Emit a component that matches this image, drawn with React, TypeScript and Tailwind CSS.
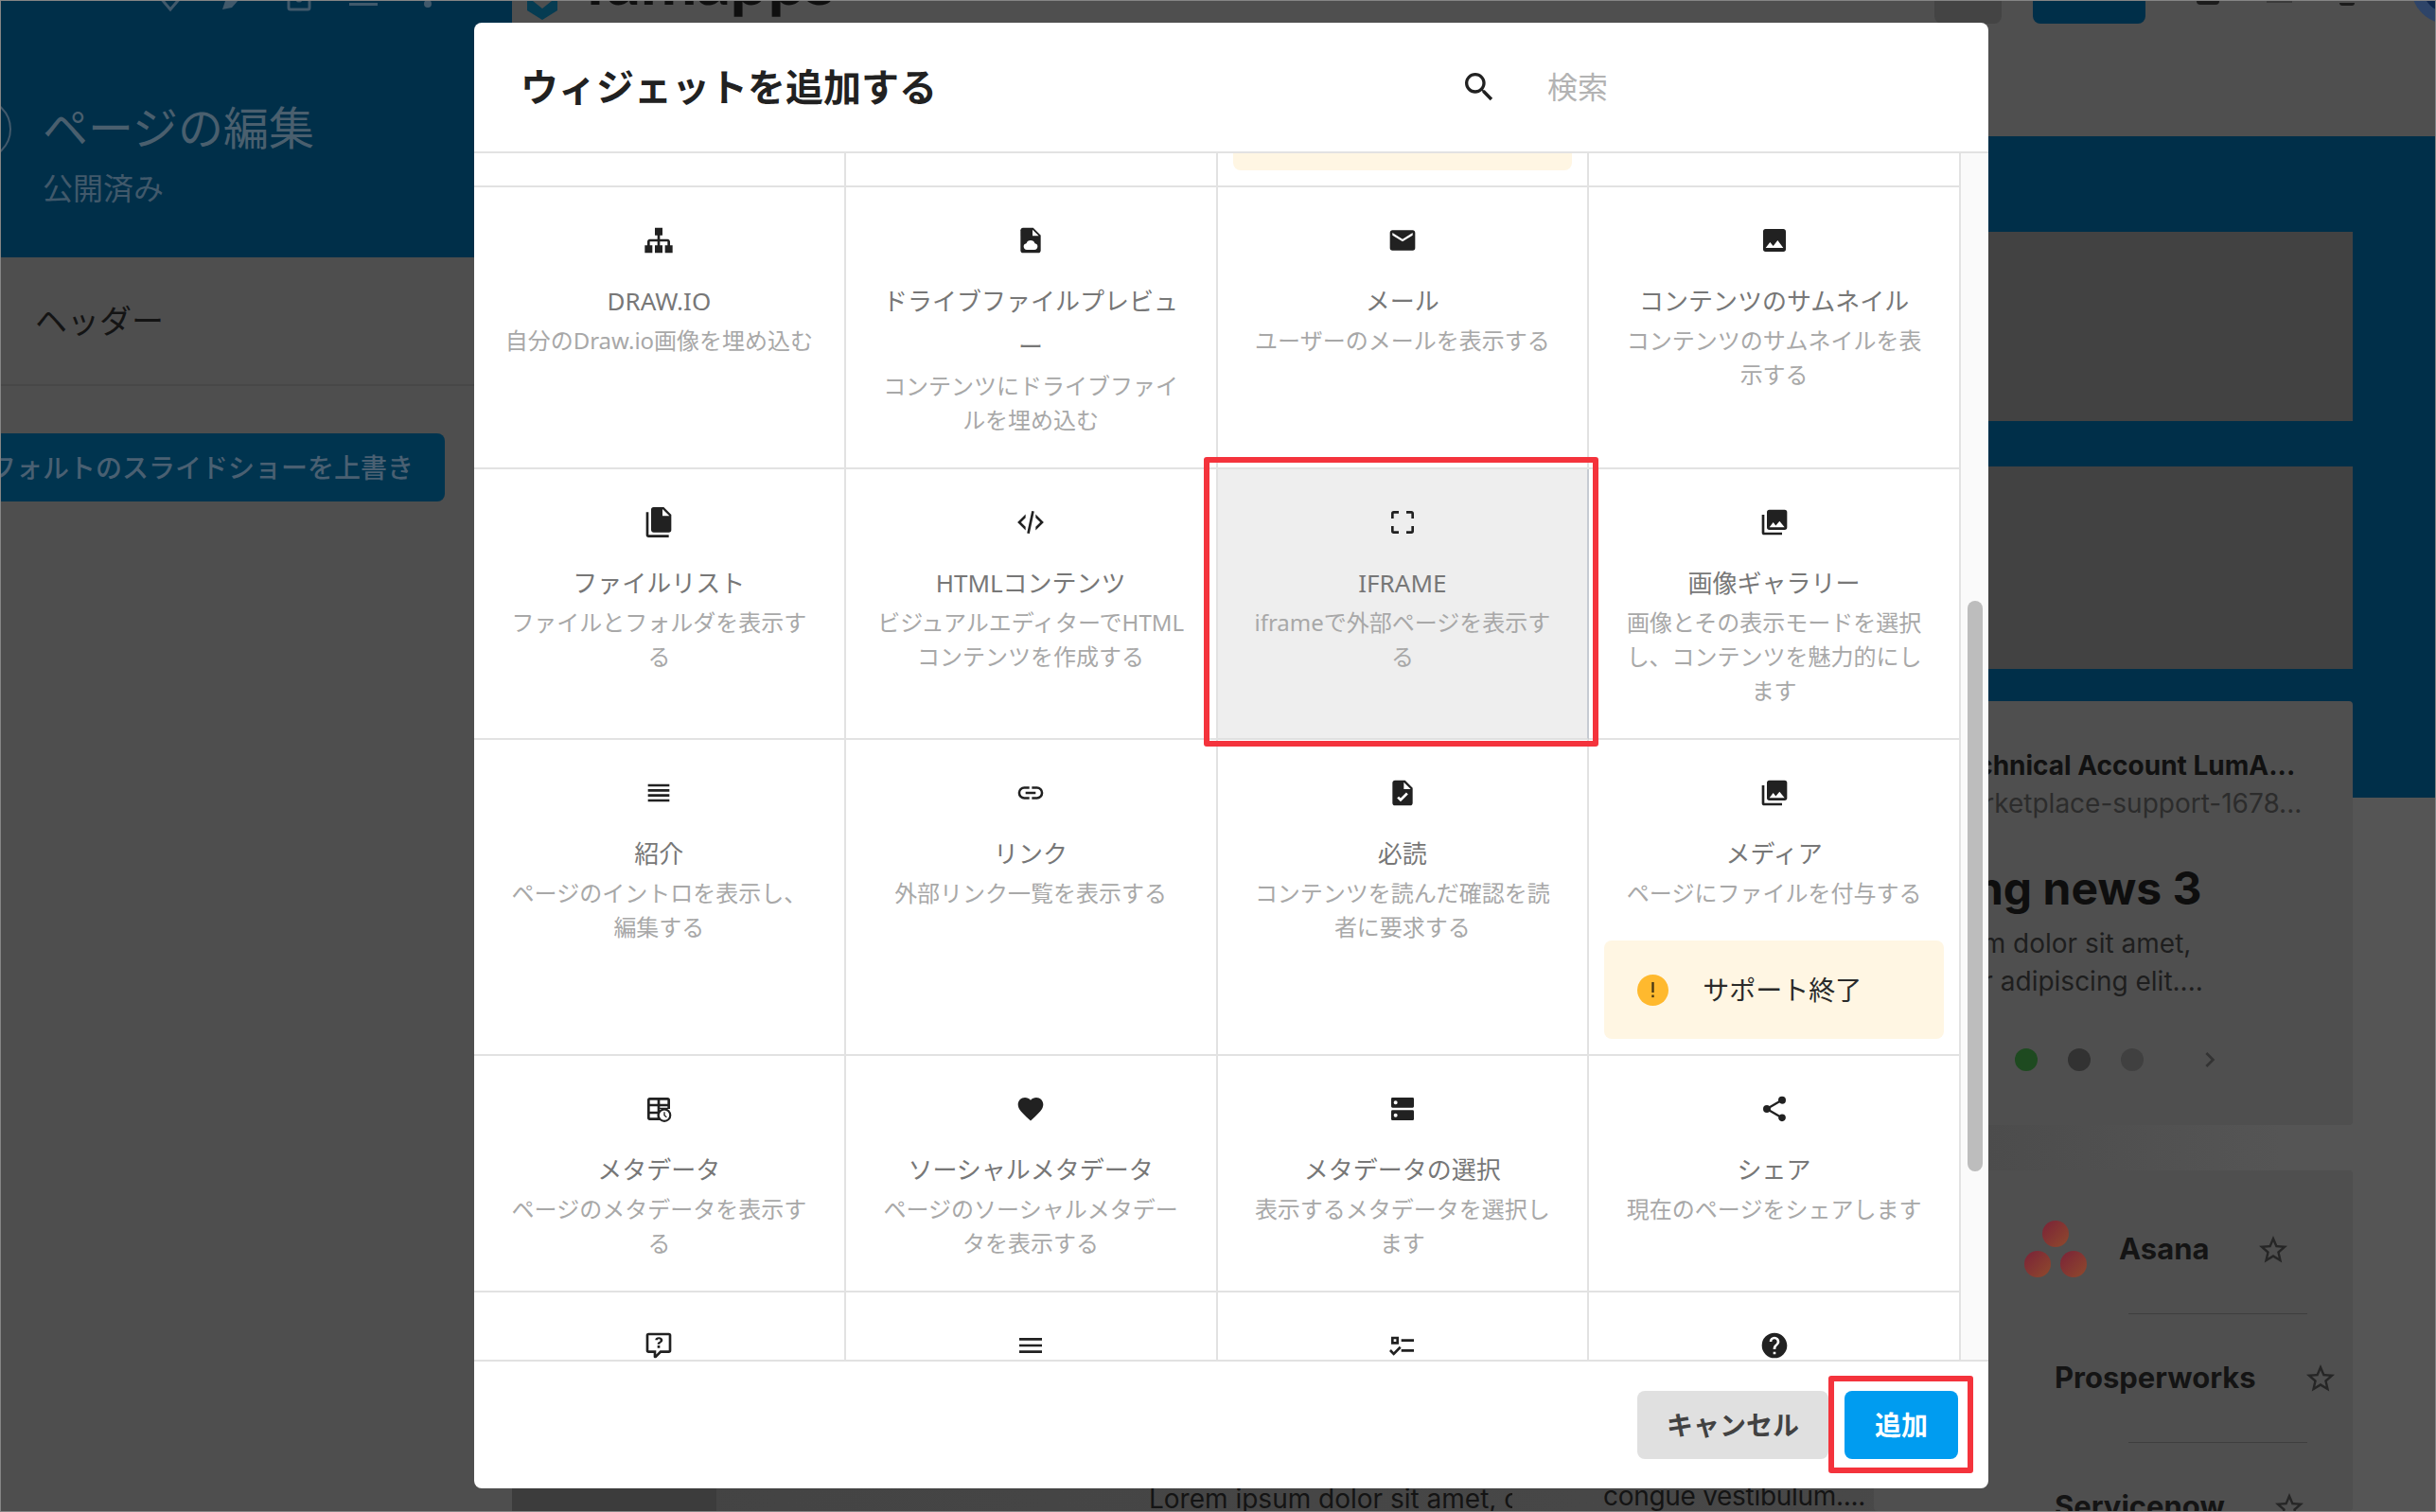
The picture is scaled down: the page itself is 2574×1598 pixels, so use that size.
import React from "react";

const P = {
  sitemap: "M9,2V8H11V11H5C3.89,11 3,11.89 3,13V16H1V22H7V16H5V13H11V16H9V22H15V16H13V13H19V16H17V22H23V16H21V13C21,11.89 20.11,11 19,11H13V8H15V2H9Z",
  email: "M20,8L12,13L4,8V6L12,11L20,6M20,4H4C2.89,4 2,4.89 2,6V18A2,2 0 0,0 4,20H20A2,2 0 0,0 22,18V6C22,4.89 21.1,4 20,4Z",
  image: "M8.5,13.5L11,16.5L14.5,12L19,18H5M21,19V5C21,3.89 20.1,3 19,3H5A2,2 0 0,0 3,5V19A2,2 0 0,0 5,21H19A2,2 0 0,0 21,19Z",
  files: "M15,7H20.5L15,1.5V7M8,0H16L22,6V18A2,2 0 0,1 20,20H8C6.89,20 6,19.1 6,18V2A2,2 0 0,1 8,0M4,4V22H20V24H4A2,2 0 0,1 2,22V4H4Z",
  xml: "M12.89,3L14.85,3.4L11.11,21L9.15,20.6L12.89,3M19.59,12L16,8.41V5.58L22.42,12L16,18.41V15.58L19.59,12M1.58,12L8,5.58V8.41L4.41,12L8,15.58V18.41L1.58,12Z",
  crop: "M19,3H15V5H19V9H21V5C21,3.89 20.1,3 19,3M19,19H15V21H19A2,2 0 0,0 21,19V15H19M5,15H3V19A2,2 0 0,0 5,21H9V19H5M3,5V9H5V5H9V3H5A2,2 0 0,0 3,5Z",
  images: "M22,16V4A2,2 0 0,0 20,2H8A2,2 0 0,0 6,4V16A2,2 0 0,0 8,18H20A2,2 0 0,0 22,16M11,12L13.03,14.71L16,11L20,16H8M2,6V20A2,2 0 0,0 4,22H18V20H4V6",
  headline: "M3.5,5H20.5V7H3.5V5M3.5,9H20.5V11H3.5V9M3.5,13H20.5V15H3.5V13M3.5,17H20.5V19H3.5V17Z",
  link: "M3.9,12C3.9,10.29 5.29,8.9 7,8.9H11V7H7A5,5 0 0,0 2,12A5,5 0 0,0 7,17H11V15.1H7C5.29,15.1 3.9,13.71 3.9,12M8,13H16V11H8V13M17,7H13V8.9H17C18.71,8.9 20.1,10.29 20.1,12C20.1,13.71 18.71,15.1 17,15.1H13V17H17A5,5 0 0,0 22,12A5,5 0 0,0 17,7Z",
  fileCheck: "M14 2H6C4.89 2 4 2.89 4 4V20C4 21.11 4.89 22 6 22H18C19.11 22 20 21.11 20 20V8L14 2M10.47 19L7.64 16.17L9.05 14.76L10.47 16.17L14.95 11.69L16.36 13.1L10.47 19M13 9V3.5L18.5 9H13Z",
  heart: "M12,21.35L10.55,20.03C5.4,15.36 2,12.27 2,8.5C2,5.41 4.42,3 7.5,3C9.24,3 10.91,3.81 12,5.08C13.09,3.81 14.76,3 16.5,3C19.58,3 22,5.41 22,8.5C22,12.27 18.6,15.36 13.45,20.03L12,21.35Z",
  share: "M18,16.08C17.24,16.08 16.56,16.38 16.04,16.85L8.91,12.7C8.96,12.47 9,12.24 9,12C9,11.76 8.96,11.53 8.91,11.3L15.96,7.19C16.5,7.69 17.21,8 18,8A3,3 0 0,0 21,5A3,3 0 0,0 18,2A3,3 0 0,0 15,5C15,5.24 15.04,5.47 15.09,5.7L8.04,9.81C7.5,9.31 6.79,9 6,9A3,3 0 0,0 3,12A3,3 0 0,0 6,15C6.79,15 7.5,14.69 8.04,14.19L15.16,18.34C15.11,18.55 15.08,18.77 15.08,19C15.08,20.61 16.39,21.91 18,21.91C19.61,21.91 20.92,20.61 20.92,19A2.92,2.92 0 0,0 18,16.08Z",
  comment: "M4,2A2,2 0 0,0 2,4V16A2,2 0 0,0 4,18H8V21A1,1 0 0,0 9,22H9.5C9.75,22 10,21.9 10.2,21.71L13.9,18H20A2,2 0 0,0 22,16V4A2,2 0 0,0 20,2H4M4,4H20V16H13.08L10,19.08V16H4V4M12.19,5.5C11.3,5.5 10.59,5.68 10.05,6.04C9.5,6.4 9.22,7 9.27,7.69H11.24C11.24,7.41 11.34,7.2 11.5,7.06C11.7,6.92 11.92,6.85 12.19,6.85C12.5,6.85 12.77,6.93 12.95,7.11C13.13,7.28 13.22,7.5 13.22,7.8C13.22,8.08 13.14,8.33 13,8.54C12.83,8.76 12.62,8.94 12.36,9.08C11.84,9.4 11.5,9.68 11.29,9.92C11.1,10.16 11,10.5 11,11H13C13,10.72 13.05,10.5 13.14,10.32C13.23,10.15 13.4,10 13.66,9.85C14.12,9.64 14.5,9.36 14.79,9C15.08,8.63 15.23,8.24 15.23,7.8C15.23,7.1 14.96,6.54 14.42,6.12C13.88,5.71 13.13,5.5 12.19,5.5M11,12V14H13V12H11Z",
  menu: "M3,6H21V8H3V6M3,11H21V13H3V11M3,16H21V18H3V16Z",
  checks: "M3,5H9V11H3V5M5,7V9H7V7H5M11,7H21V9H11V7M11,15H21V17H11V15M5,20L1.5,16.5L2.91,15.09L5,17.17L9.59,12.59L11,14L5,20Z",
  help: "M15.07,11.25L14.17,12.17C13.45,12.89 13,13.5 13,15H11V14.5C11,13.39 11.45,12.39 12.17,11.67L13.41,10.41C13.78,10.05 14,9.55 14,9C14,7.89 13.1,7 12,7A2,2 0 0,0 10,9H8A4,4 0 0,1 12,5A4,4 0 0,1 16,9C16,9.88 15.64,10.67 15.07,11.25M13,19H11V17H13M12,2A10,10 0 0,0 2,12A10,10 0 0,0 12,22A10,10 0 0,0 22,12C22,6.47 17.5,2 12,2Z",
  search: "M9.5,3A6.5,6.5 0 0,1 16,9.5C16,11.11 15.41,12.59 14.44,13.73L14.71,14H15.5L20.5,19L19,20.5L14,15.5V14.71L13.73,14.44C12.59,15.41 11.11,16 9.5,16A6.5,6.5 0 0,1 3,9.5A6.5,6.5 0 0,1 9.5,3M9.5,5C7,5 5,7 5,9.5C5,12 7,14 9.5,14C12,14 14,12 14,9.5C14,7 12,5 9.5,5Z",
  star: "M12,15.39L8.24,17.66L9.23,13.38L5.91,10.5L10.29,10.13L12,6.09L13.71,10.13L18.09,10.5L14.77,13.38L15.76,17.66M22,9.24L14.81,8.63L12,2L9.19,8.62L2,9.24L7.45,13.97L5.82,21L12,17.27L18.18,21L16.54,13.97L22,9.24Z",
  chevron: "M8.59,16.58L13.17,12L8.59,7.41L10,6L16,12L10,18L8.59,16.58Z",
};

function Glyph({ d, className = "w-8 h-8 shrink-0 text-[#212121]" }: { d: string; className?: string }) {
  return (
    <svg viewBox="0 0 24 24" className={className} fill="currentColor">
      <path d={d} />
    </svg>
  );
}

function FileCloud() {
  return (
    <svg viewBox="0 0 24 24" className="w-8 h-8 shrink-0 text-[#212121]" fill="currentColor">
      <path d="M14 2H6C4.89 2 4 2.89 4 4V20C4 21.11 4.89 22 6 22H18C19.11 22 20 21.11 20 20V8L14 2Z" />
      <path fill="#fff" d="M13.5 3.5V8.5H18.5Z" />
      <path fill="#fff" d="M9 19.5a2.6 2.6 0 0 1-.4-5.15 3.6 3.6 0 0 1 6.8 0A2.6 2.6 0 0 1 15 19.5Z" />
    </svg>
  );
}

function TableClock() {
  return (
    <svg viewBox="0 0 24 24" className="w-8 h-8 shrink-0 text-[#212121]" fill="currentColor">
      <path d="M5 3H19A2 2 0 0 1 21 5V12H13V21H5A2 2 0 0 1 3 19V5A2 2 0 0 1 5 3Z" />
      <path fill="#fff" d="M5 5H11V8H5ZM13 5H19V8H13ZM5 10H11V14H5ZM5 16H11V19H5ZM13 10H19V11H13Z" />
      <circle cx="16.5" cy="17" r="5.5" />
      <circle cx="16.5" cy="17" r="3.9" fill="#fff" />
      <path d="M16 14.5H17V16.8L18.6 18.2L18 18.9L16 17.2Z" />
    </svg>
  );
}

function Server() {
  return (
    <svg viewBox="0 0 24 24" className="w-8 h-8 shrink-0 text-[#212121]" fill="currentColor">
      <path
        fillRule="evenodd"
        d="M4 3H20A1 1 0 0 1 21 4V10A1 1 0 0 1 20 11H4A1 1 0 0 1 3 10V4A1 1 0 0 1 4 3ZM4 13H20A1 1 0 0 1 21 14V20A1 1 0 0 1 20 21H4A1 1 0 0 1 3 20V14A1 1 0 0 1 4 13ZM6.5 5.5A1.5 1.5 0 1 0 6.5 8.5A1.5 1.5 0 1 0 6.5 5.5ZM6.5 15.5A1.5 1.5 0 1 0 6.5 18.5A1.5 1.5 0 1 0 6.5 15.5Z"
      />
    </svg>
  );
}

function Warning() {
  return (
    <div className="h-[104px] w-full mt-8 rounded-lg bg-[#fff6e3] flex items-center pl-[35px] gap-[36px] shrink-0">
      <svg viewBox="0 0 33 33" className="w-[33px] h-[33px]">
        <circle cx="16.5" cy="16.5" r="16.5" fill="#ffb92e" />
        <rect x="15.3" y="8" width="2.4" height="11" fill="#4a3a14" />
        <rect x="15.3" y="21.5" width="2.4" height="2.6" fill="#4a3a14" />
      </svg>
      <span className="text-[28px] text-[#2a2a2a] leading-9">サポート終了</span>
    </div>
  );
}

type Cell = {
  icon: React.ReactNode;
  title?: string;
  desc?: string;
  warn?: boolean;
  sel?: boolean;
};

const cells: Cell[] = [
  { icon: <Glyph d={P.sitemap} />, title: "DRAW.IO", desc: "自分のDraw.io画像を埋め込む" },
  { icon: <FileCloud />, title: "ドライブファイルプレビュ\nー", desc: "コンテンツにドライブファイ\nルを埋め込む" },
  { icon: <Glyph d={P.email} />, title: "メール", desc: "ユーザーのメールを表示する" },
  { icon: <Glyph d={P.image} />, title: "コンテンツのサムネイル", desc: "コンテンツのサムネイルを表\n示する" },
  { icon: <Glyph d={P.files} />, title: "ファイルリスト", desc: "ファイルとフォルダを表示す\nる" },
  { icon: <Glyph d={P.xml} />, title: "HTMLコンテンツ", desc: "ビジュアルエディターでHTML\nコンテンツを作成する" },
  { icon: <Glyph d={P.crop} />, title: "IFRAME", desc: "iframeで外部ページを表示す\nる", sel: true },
  { icon: <Glyph d={P.images} />, title: "画像ギャラリー", desc: "画像とその表示モードを選択\nし、コンテンツを魅力的にし\nます" },
  { icon: <Glyph d={P.headline} />, title: "紹介", desc: "ページのイントロを表示し、\n編集する" },
  { icon: <Glyph d={P.link} />, title: "リンク", desc: "外部リンク一覧を表示する" },
  { icon: <Glyph d={P.fileCheck} />, title: "必読", desc: "コンテンツを読んだ確認を読\n者に要求する" },
  { icon: <Glyph d={P.images} />, title: "メディア", desc: "ページにファイルを付与する", warn: true },
  { icon: <TableClock />, title: "メタデータ", desc: "ページのメタデータを表示す\nる" },
  { icon: <Glyph d={P.heart} />, title: "ソーシャルメタデータ", desc: "ページのソーシャルメタデー\nタを表示する" },
  { icon: <Server />, title: "メタデータの選択", desc: "表示するメタデータを選択し\nます" },
  { icon: <Glyph d={P.share} />, title: "シェア", desc: "現在のページをシェアします" },
  { icon: <Glyph d={P.comment} /> },
  { icon: <Glyph d={P.menu} /> },
  { icon: <Glyph d={P.checks} /> },
  { icon: <Glyph d={P.help} /> },
];

function WidgetCell({ icon, title, desc, warn, sel }: Cell) {
  return (
    <div
      className={`flex flex-col items-center px-4 pt-10 pb-8 border-b-2 border-r-2 text-center ${
        warn ? "!pb-4" : ""
      } ${sel ? "bg-[#eeeeee] border-b-[#e0e0e0] border-r-[#c6cbd2]" : "bg-white border-[#e2e2e2]"}`}
    >
      {icon}
      {title && <div className="mt-6 text-[26px] leading-[48px] text-[#777777] whitespace-pre">{title}</div>}
      {desc && <div className="text-[24px] leading-[36px] text-[#a8a8a8] whitespace-pre">{desc}</div>}
      {warn && <Warning />}
    </div>
  );
}

function Modal() {
  return (
    <div className="absolute left-[500px] top-[23px] w-[1600px] h-[1549px] rounded-lg bg-white flex flex-col overflow-hidden">
      <header className="h-[138px] shrink-0 border-b-2 border-[#e2e2e2] flex items-center pl-[49px]">
        <h2 className="text-[40px] font-semibold text-[#212121] leading-[48px]">ウィジェットを追加する</h2>
        <div className="ml-auto w-[558px] flex items-center">
          <Glyph d={P.search} className="w-10 h-10 shrink-0 text-[#212121]" />
          <span className="ml-[52px] text-[32px] text-[#b3b3b3]">検索</span>
        </div>
      </header>
      <div className="flex-1 min-h-0 flex">
        <div className="w-[1571px] overflow-hidden">
          <div className="grid grid-cols-4 bg-white">
            <div className="h-[36px] border-b-2 border-r-2 border-[#e2e2e2]" />
            <div className="h-[36px] border-b-2 border-r-2 border-[#e2e2e2]" />
            <div className="h-[36px] border-b-2 border-r-2 border-[#e2e2e2] px-4">
              <div className="h-[18px] bg-[#fff6e3] rounded-b-lg" />
            </div>
            <div className="h-[36px] border-b-2 border-r-2 border-[#e2e2e2]" />
            {cells.map((c, i) => (
              <WidgetCell key={i} {...c} />
            ))}
          </div>
        </div>
        <div className="flex-1 bg-[#fafafa] pt-[473px] pl-[7px]">
          <div className="w-4 h-[603px] rounded-lg bg-[#bdbdbd]" />
        </div>
      </div>
      <footer className="h-[136px] shrink-0 border-t-2 border-[#e2e2e2] flex items-center justify-end pr-8 gap-[17px]">
        <button className="w-[202px] h-[72px] rounded-lg bg-[#e0e0e0] text-[28px] font-semibold text-[#424242]">キャンセル</button>
        <button className="w-[120px] h-[72px] rounded-lg bg-[#009cf0] text-[28px] font-semibold text-white">追加</button>
      </footer>
    </div>
  );
}

function Sidebar() {
  const dim = "text-[#41596b]";
  return (
    <aside className="w-[540px] shrink-0 bg-[#4e4e4e] flex flex-col">
      <div className="h-[271px] bg-[#002f49] flex flex-col pl-[44px] relative overflow-hidden">
        <div className={`flex items-end h-[11px] pl-[120px] gap-[38px] ${dim}`}>
          <svg viewBox="0 0 30 30" className="w-[30px] h-[30px] shrink-0" fill="none" stroke="currentColor" strokeWidth="3"><path d="M15 28L3 14L15 2L27 14Z" /></svg>
          <svg viewBox="0 0 30 30" className="w-[30px] h-[30px] shrink-0" fill="currentColor"><path d="M2 28L6 16L24 2L28 8L12 26Z" /></svg>
          <svg viewBox="0 0 30 30" className="w-[30px] h-[30px] shrink-0" fill="none" stroke="currentColor" strokeWidth="3"><rect x="4" y="2" width="22" height="26" rx="2" /><circle cx="15" cy="17" r="2" fill="currentColor" /></svg>
          <svg viewBox="0 0 30 30" className="w-[30px] h-[30px] shrink-0 mb-[3px]" fill="currentColor"><rect x="0" y="24" width="30" height="3" /></svg>
          <svg viewBox="0 0 30 30" className="w-[30px] h-[30px] shrink-0 mb-[2px]" fill="currentColor"><circle cx="15" cy="24" r="4" /></svg>
        </div>
        <div className="absolute -left-[54px] top-[103px] w-[65px] h-[65px] rounded-full border-2 border-[#41596b]" />
        <div className="mt-[91px] text-[48px] leading-[64px] text-[#4a5f6e]">ページの編集</div>
        <div className="mt-[12px] text-[32px] leading-10 text-[#41596b]">公開済み</div>
      </div>
      <div className="h-[136px] border-b-2 border-[#474747] flex items-center pl-[36px] text-[34px] text-[#141414]">ヘッダー</div>
      <div className="mt-[50px] w-[469px] h-[72px] rounded-r-lg bg-[#00344f] flex items-center justify-end pr-[33px] overflow-hidden">
        <span className="whitespace-nowrap text-[28px] font-medium text-[#4a6072]">デフォルトのスライドショーを上書き</span>
      </div>
    </aside>
  );
}

function TopBar() {
  return (
    <div className="h-[143px] shrink-0 flex items-start bg-[#4f4f4f] overflow-hidden">
      <svg viewBox="0 0 32 20" className="ml-4 w-8 h-5 shrink-0 text-[#063c52]" fill="currentColor"><path d="M0 0H32V10L16 20L0 10Z" /><path d="M6 0L16 8L26 0Z" fill="#4f4f4f" /></svg>
      <div className="ml-[31px] -mt-[60px] text-[72px] leading-[72px] font-bold text-[#0f0f0f] font-['Lato',sans-serif] tracking-[-1px]">lumapps</div>
      <div className="ml-auto flex items-start -mr-[51px]">
        <div className="w-[71px] h-6 rounded-b-lg bg-[#444444]" />
        <div className="ml-[33px] w-[119px] h-6 rounded-b-lg bg-[#002f49]" />
        <div className="ml-[54px] w-6 h-1 rounded-b bg-[#1c1c1c]" />
        <div className="ml-[50px] w-[27px] h-[2px] bg-[#3a3a3a]" />
        <div className="ml-[50px] mt-[2px] w-[16px] h-[3px] rounded-b bg-[#1c1c1c]" />
        <div className="ml-[60px] -mt-[52px] w-[76px] h-[76px] rounded-full bg-[#10264d] border-[12px] border-[#2e4468]" />
      </div>
    </div>
  );
}

function StarRow({ text, logo, ml }: { text: string; logo?: boolean; ml: number }) {
  return (
    <div className="h-[135px] flex items-center" style={{ marginLeft: ml }}>
      {logo && (
        <svg viewBox="0 0 66 60" className="w-[66px] h-[60px] mr-[34px] -mt-[2px]">
          <defs>
            <linearGradient id="a" x1="0" y1="0" x2="1" y2="1">
              <stop offset="0" stopColor="#7a2238" />
              <stop offset="1" stopColor="#8f4a2c" />
            </linearGradient>
          </defs>
          <circle cx="33" cy="14" r="14" fill="url(#a)" />
          <circle cx="14" cy="46" r="14" fill="url(#a)" />
          <circle cx="52" cy="46" r="14" fill="url(#a)" />
        </svg>
      )}
      <span className="text-[31px] font-bold text-[#141414]">{text}</span>
      <Glyph d={P.star} className="ml-[50px] w-9 h-9 shrink-0 text-[#262626]" />
    </div>
  );
}

function RightColumn() {
  const sep = <div className="ml-[269px] w-[189px] h-px bg-[#3e3e3e]" />;
  return (
    <div className="w-[506px] shrink-0 flex flex-col font-['Inter',sans-serif]">
      <div className="mt-[101px] h-[200px] bg-[#424242]" />
      <div className="mt-[48px] h-[214px] bg-[#424242]" />
      <div className="mt-[34px] h-[448px] rounded bg-[#4f4f4f] shrink-0">
        <div className="pl-[76px] pt-[48px] text-[28px] leading-10 font-bold text-[#111111] whitespace-nowrap">Technical Account LumA...</div>
        <div className="pl-[76px] text-[28px] leading-10 text-[#2c2c2c] whitespace-nowrap">marketplace-support-1678...</div>
        <div className="-ml-[25px] mt-[38px] text-[48px] leading-[64px] font-bold text-[#0e0e0e] whitespace-nowrap">Training news 3</div>
        <div className="-ml-[32px] mt-[6px] text-[28px] leading-10 text-[#1e1e1e] whitespace-nowrap">Lorem ipsum dolor sit amet,<br />consectetur adipiscing elit....</div>
        <div className="pl-[149px] mt-[47px] flex items-center gap-[32px]">
          <div className="w-6 h-6 rounded-full bg-[#1e4a20]" />
          <div className="w-6 h-6 rounded-full bg-[#323232]" />
          <div className="w-6 h-6 rounded-full bg-[#404040]" />
          <Glyph d={P.chevron} className="ml-[22px] w-8 h-8 shrink-0 text-[#333333]" />
        </div>
      </div>
      <div className="mt-[48px] pt-[16px] flex-1 rounded bg-[#4f4f4f] overflow-hidden">
        <StarRow text="Asana" logo ml={159} />
        {sep}
        <StarRow text="Prosperworks" ml={191} />
        {sep}
        <StarRow text="Servicenow" ml={191} />
      </div>
    </div>
  );
}

function Main() {
  return (
    <main className="flex-1 min-w-0 flex flex-col">
      <TopBar />
      <div className="flex-1 min-h-0 flex bg-[linear-gradient(#002f49_699px,transparent_699px),linear-gradient(90deg,#434343,#484848_70%,#555555_92%)] pr-[87px]">
        <div className="flex-1 min-w-0 flex items-end font-['Inter',sans-serif]">
          <div className="w-[216px] h-[25px] shrink-0 bg-[#3c3c3c]" />
          <div className="flex-1 min-w-0 h-[25px] flex">
            <span className="ml-[457px] w-[384px] shrink-0 overflow-hidden whitespace-nowrap text-[28px] leading-[24px] text-[#141414]">Lorem ipsum dolor sit amet, consectetur</span>
            <span className="ml-[96px] -mt-[3px] shrink-0 whitespace-nowrap text-[28px] leading-[24px] tracking-[-0.3px] text-[#141414]">congue vestibulum....</span>
          </div>
        </div>
        <RightColumn />
      </div>
    </main>
  );
}

export default function App() {
  return (
    <div className="relative w-[2574px] h-[1598px] overflow-hidden border border-[#858585] box-border flex font-['Noto_Sans','Noto_Sans_CJK_JP',sans-serif]">
      <Sidebar />
      <Main />
      <Modal />
      <div className="absolute left-[1271px] top-[482px] w-[417px] h-[306px] border-[6px] border-[#f4333c] rounded-[3px]" />
      <div className="absolute left-[1931px] top-[1453px] w-[153px] h-[103px] border-[6px] border-[#f4333c] rounded-[3px]" />
    </div>
  );
}
